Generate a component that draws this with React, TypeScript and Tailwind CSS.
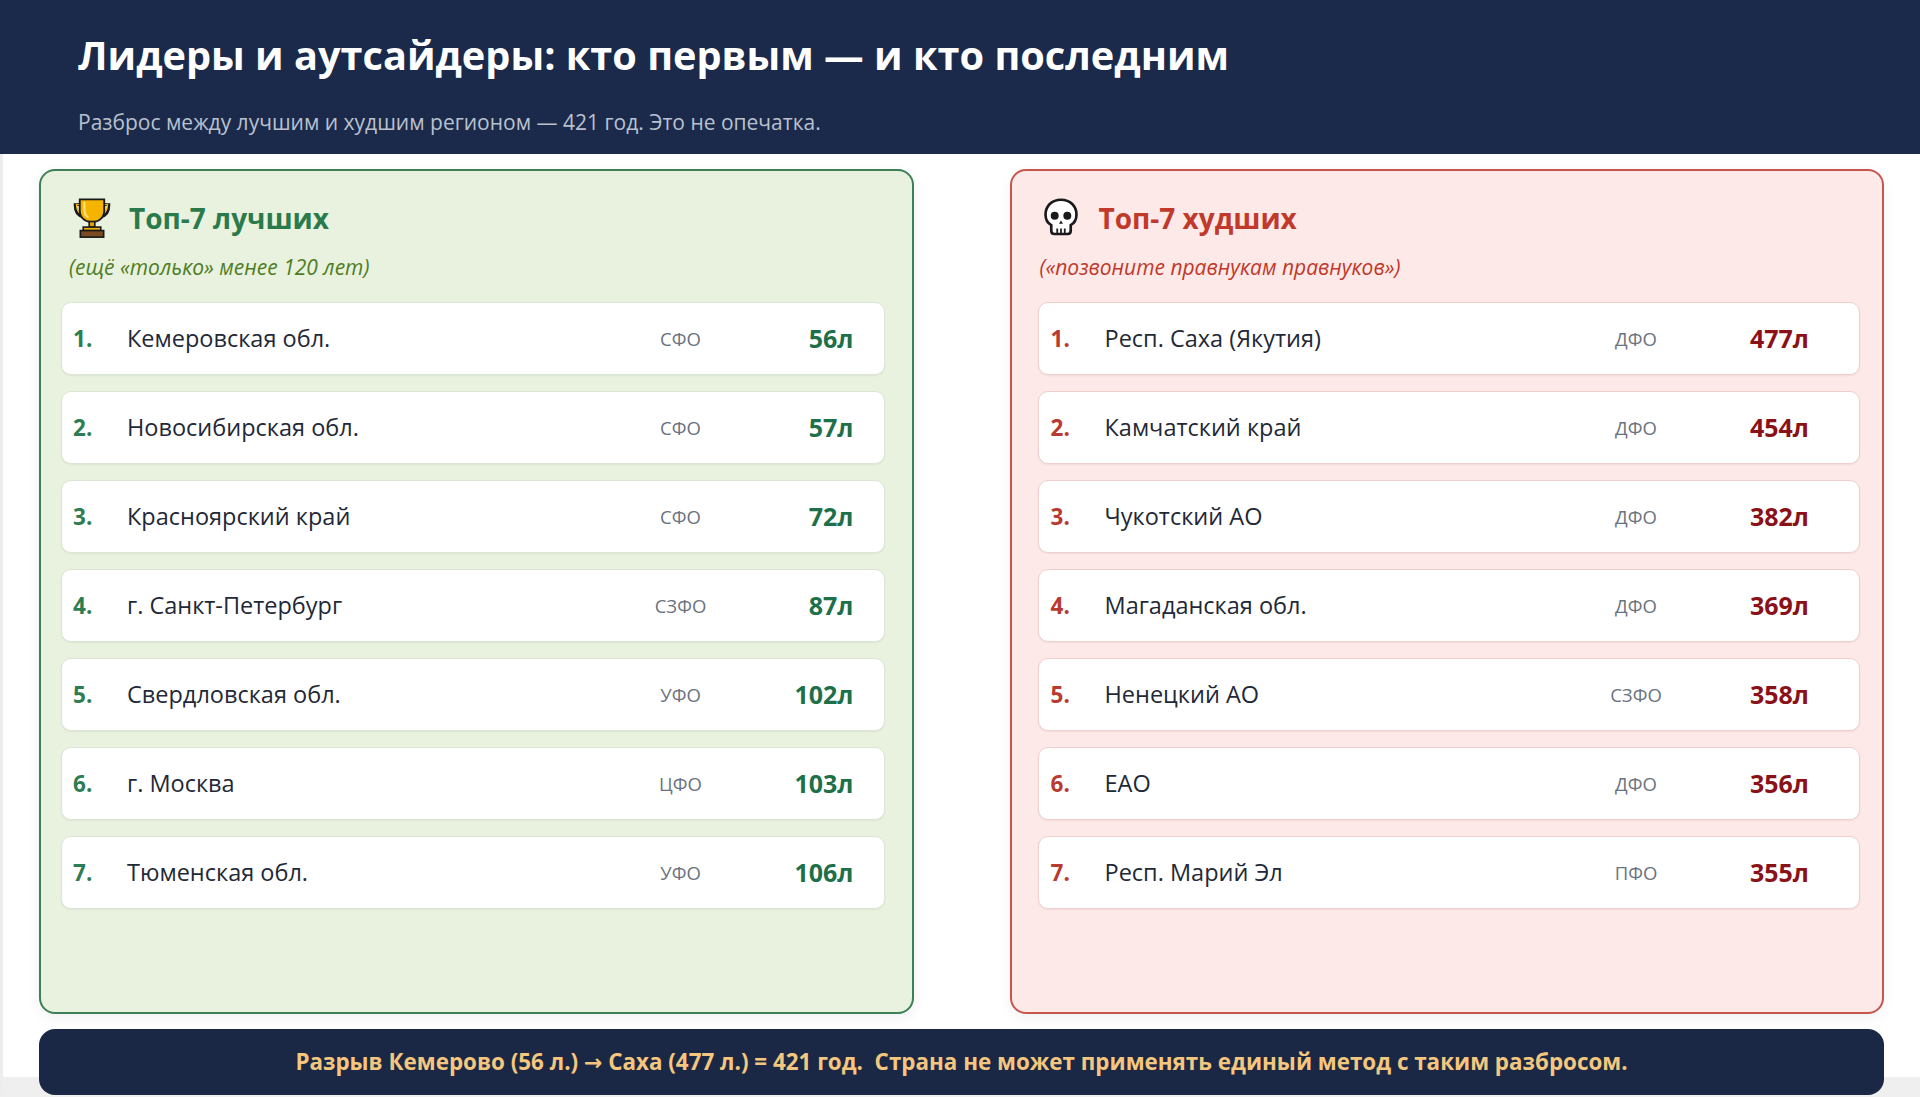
const best = [
  { name: "Кемеровская обл.", code: "СФО", years: "56л" },
  { name: "Новосибирская обл.", code: "СФО", years: "57л" },
  { name: "Красноярский край", code: "СФО", years: "72л" },
  { name: "г. Санкт-Петербург", code: "СЗФО", years: "87л" },
  { name: "Свердловская обл.", code: "УФО", years: "102л" },
  { name: "г. Москва", code: "ЦФО", years: "103л" },
  { name: "Тюменская обл.", code: "УФО", years: "106л" },
];

const worst = [
  { name: "Респ. Саха (Якутия)", code: "ДФО", years: "477л" },
  { name: "Камчатский край", code: "ДФО", years: "454л" },
  { name: "Чукотский АО", code: "ДФО", years: "382л" },
  { name: "Магаданская обл.", code: "ДФО", years: "369л" },
  { name: "Ненецкий АО", code: "СЗФО", years: "358л" },
  { name: "ЕАО", code: "ДФО", years: "356л" },
  { name: "Респ. Марий Эл", code: "ПФО", years: "355л" },
];

function Trophy() {
  return (
    <svg width="42" height="42" viewBox="0 0 36 36" fill="none">
      <path d="M8.5 6.5H3.5c0 6.5 2.8 9.8 6.8 10.3" stroke="#1a1a1a" strokeWidth="2.4" />
      <path d="M27.5 6.5h5c0 6.5-2.8 9.8-6.8 10.3" stroke="#1a1a1a" strokeWidth="2.4" />
      <path d="M8.5 6.5H4.6c0.4 5 2.6 7.7 5.6 8.5" stroke="#f4b400" strokeWidth="1" />
      <path d="M27.5 6.5h3.9c-0.4 5-2.6 7.7-5.6 8.5" stroke="#f4b400" strokeWidth="1" />
      <path d="M7.5 2h21v9.5c0 6-4.4 10-10.5 10s-10.5-4-10.5-10z" fill="#f4b400" stroke="#1a1a1a" strokeWidth="1.6" />
      <path d="M11.5 4.8v6.4c0 2.7 1.1 4.8 2.8 5.9" stroke="#ffe083" strokeWidth="1.8" strokeLinecap="round" />
      <rect x="15.6" y="21" width="4.8" height="4.8" fill="#e0a000" stroke="#1a1a1a" strokeWidth="1.4" />
      <rect x="10.5" y="25.8" width="15" height="3" fill="#f4b400" stroke="#1a1a1a" strokeWidth="1.4" />
      <rect x="8" y="28.8" width="20" height="5.6" fill="#7b4a22" stroke="#1a1a1a" strokeWidth="1.4" />
    </svg>
  );
}

function Skull() {
  return (
    <svg width="40" height="42" viewBox="0 0 36 38" fill="none">
      <path
        d="M18 2.5C9.6 2.5 4 8.3 4 15.8c0 4.6 2 7.9 5.2 9.6v5.2c0 1.8 1.1 2.9 2.9 2.9h11.8c1.8 0 2.9-1.1 2.9-2.9v-5.2c3.2-1.7 5.2-5 5.2-9.6C32 8.3 26.4 2.5 18 2.5z"
        fill="#ffffff"
        stroke="#1a1a1a"
        strokeWidth="2.4"
      />
      <circle cx="12.3" cy="17" r="3.6" fill="#1a1a1a" />
      <circle cx="23.7" cy="17" r="3.6" fill="#1a1a1a" />
      <path d="M18 21.2l-1.8 3h3.6z" fill="#1a1a1a" />
      <path d="M14.6 28.5v4.5M18 28.5v4.5M21.4 28.5v4.5" stroke="#1a1a1a" strokeWidth="1.6" />
    </svg>
  );
}

type Item = { name: string; code: string; years: string };

function Row({ i, item, good }: { i: number; item: Item; good: boolean }) {
  return (
    <div
      className={
        good
          ? "h-[73px] flex items-center bg-white rounded-[10px] border border-[#dde6d6] shadow-[0_1px_2px_rgba(0,0,0,0.06)] pl-[11px] pr-[30px]"
          : "h-[73px] flex items-center bg-white rounded-[10px] border border-[#f0cfcd] shadow-[0_1px_2px_rgba(0,0,0,0.06)] pl-[12px] pr-[50px]"
      }
    >
      <div className={good ? "w-[54px] text-[22.5px] font-bold text-[#2e7d52]" : "w-[54px] text-[22.5px] font-bold text-[#b83a30]"}>
        {i + 1}.
      </div>
      <div className="flex-1 text-[23.5px] text-[#1f2937]">{item.name}</div>
      <div className="w-[110px] mr-[28px] text-center text-[18.5px] text-[#6b7280]">{item.code}</div>
      <div className={good ? "w-[90px] text-right text-[25px] font-bold text-[#1e7048]" : "w-[90px] text-right text-[25px] font-bold text-[#8b1118]"}>
        {item.years}
      </div>
    </div>
  );
}

function Panel({ good }: { good: boolean }) {
  const items = good ? best : worst;
  return (
    <div
      className={
        good
          ? "h-[845px] rounded-2xl border-2 border-[#3d7f56] bg-[#e8f2de] shadow-[0_4px_14px_rgba(0,0,0,0.06)]"
          : "h-[845px] rounded-2xl border-2 border-[#c6564e] bg-[#fde9e8] shadow-[0_4px_14px_rgba(0,0,0,0.06)]"
      }
    >
      <div className={good ? "mt-[27px] ml-[30px] flex items-center h-[40px] gap-[16px]" : "mt-[27px] ml-[29px] flex items-center h-[40px] gap-[18px]"}>
        {good ? <Trophy /> : <Skull />}
        <h2 className={good ? "text-[28px] font-bold text-[#2a7a4b]" : "text-[28px] font-bold text-[#c0392b]"}>
          {good ? "Топ-7 лучших" : "Топ-7 худших"}
        </h2>
      </div>
      <p className={good ? "mt-[15px] ml-[28px] text-[21px] leading-[28px] italic text-[#4f7d1e]" : "mt-[15px] ml-[28px] text-[21px] leading-[28px] italic text-[#c0392b]"}>
        {good ? "(ещё «только» менее 120 лет)" : "(«позвоните правнукам правнуков»)"}
      </p>
      <div className={good ? "mt-[21px] ml-[20px] mr-[27px] flex flex-col gap-[16px]" : "mt-[21px] ml-[26px] mr-[22px] flex flex-col gap-[16px]"}>
        {items.map((item, i) => (
          <Row key={item.name} i={i} item={item} good={good} />
        ))}
      </div>
    </div>
  );
}

export default function App() {
  return (
    <div
      className="w-[1920px] h-[1097px] overflow-hidden bg-[linear-gradient(to_bottom,#ffffff_1077px,#efefef_1077px)]"
      style={{ fontFamily: '"Open Sans", "Noto Sans", sans-serif' }}
    >
      {/* ─── HEADER ─── */}
      <header className="h-[154px] bg-[#1b2a4a] px-[78px] pt-[31px]">
        <h1 className="text-[39.7px] leading-[48px] font-bold text-white">
          Лидеры и аутсайдеры: кто первым — и кто последним
        </h1>
        <p className="mt-[29px] text-[21px] leading-[28px] text-[#b9c1cf]">
          Разброс между лучшим и худшим регионом — 421 год. Это не опечатка.
        </p>
      </header>

      {/* ─── PANELS ─── */}
      <div className="border-l-[3px] border-[#ededed]">
        <div className="grid grid-cols-2 gap-[96px] pt-[15px] pl-[36px] pr-[36px]">
          <Panel good />
          <Panel good={false} />
        </div>

        {/* ─── FOOTER ─── */}
        <div className="mt-[15px] ml-[36px] mr-[36px] h-[66px] rounded-2xl bg-[#1a2745] flex items-center justify-center">
          <p className="text-[22.4px] font-bold text-[#f5c77e] whitespace-pre">
            {"Разрыв Кемерово (56 л.) "}
            <span className="font-['DejaVu_Sans',sans-serif] text-[22px]">→</span>
            {" Саха (477 л.) = 421 год.  Страна не может применять единый метод с таким разбросом."}
          </p>
        </div>
      </div>
    </div>
  );
}
